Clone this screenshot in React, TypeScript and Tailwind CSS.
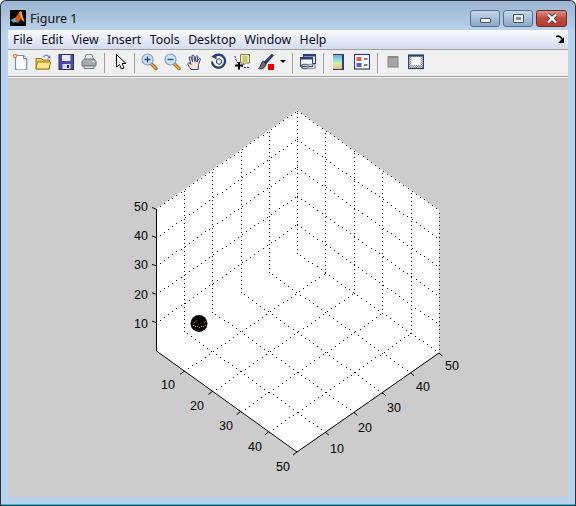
import type { ReactNode } from "react";

type Pt = [number, number];

const L: Pt = [156, 351];
const B: Pt = [297, 452];
const R: Pt = [439, 353];
const C: Pt = [297, 252.5];
const LT: Pt = [156, 209];
const T: Pt = [297, 110.5];
const RT: Pt = [439, 210];

const at = (p: Pt, q: Pt, k: number): Pt => [p[0] + ((q[0] - p[0]) * k) / 5, p[1] + ((q[1] - p[1]) * k) / 5];
const steps = [1, 2, 3, 4, 5];

// one pixel per dot, a dashed line with crisp edges drops dots on diagonals
function Dots({ a, b }: { a: Pt; b: Pt }) {
  const dx = b[0] - a[0];
  const dy = b[1] - a[1];
  const len = Math.hypot(dx, dy);
  const gap = Math.abs(dx) < 1 ? 4 : 5;
  const n = Math.floor(len / gap);
  let d = "";
  for (let i = 0; i <= n; i++) {
    const x = Math.round(a[0] + (dx * i * gap) / len);
    const y = Math.round(a[1] + (dy * i * gap) / len);
    d += `M${x} ${y}h1v1h-1z`;
  }
  return <path d={d} fill="#000" shapeRendering="crispEdges" />;
}

function Tick({ a, b }: { a: Pt; b: Pt }) {
  return <line x1={a[0]} y1={a[1]} x2={b[0]} y2={b[1]} stroke="#000" strokeWidth="1" />;
}

function Label({ x, y, v }: { x: number; y: number; v: number }) {
  return (
    <text x={x} y={y + 4.5} textAnchor="middle" fontSize="12.5" fill="#000" className="font-['Liberation_Sans',sans-serif]">
      {v}
    </text>
  );
}

function Plot() {
  return (
    <svg viewBox="8 78 560 419" className="block h-[419px] w-[560px]">
      <polygon points={[T, RT, R, B, L, LT].map((p) => p.join(",")).join(" ")} fill="#fff" />
      {[1, 2, 3, 4].map((k) => (
        <Dots key={k} a={at(L, B, k)} b={at(C, R, k)} />
      ))}
      {steps.map((k) => (
        <Dots key={k} a={at(B, R, k)} b={at(L, C, k)} />
      ))}
      {steps.map((k) => (
        <g key={k}>
          <Dots a={at(L, C, k)} b={at(LT, T, k)} />
          <Dots a={at(C, R, k)} b={at(T, RT, k)} />
          <Dots a={at(L, LT, k)} b={at(C, T, k)} />
          <Dots a={at(C, T, k)} b={at(R, RT, k)} />
        </g>
      ))}
      <polyline points="156.5,209 156.5,351 297,452 439,353" fill="none" stroke="#000" strokeWidth="1" />
      {steps.map((k) => {
        const z = at(L, LT, k);
        const p = at(L, B, k);
        const q = at(B, R, k);
        return (
          <g key={k}>
            <Tick a={[z[0] - 4, z[1] - 1.5]} b={z} />
            <Tick a={p} b={[p[0] - 4, p[1] + 3]} />
            <Tick a={q} b={[q[0] + 3.5, q[1] + 3]} />
          </g>
        );
      })}
      {[
        [141, 323, 10],
        [141, 294, 20],
        [141, 264, 30],
        [141, 235, 40],
        [141, 206, 50],
        [168, 384, 10],
        [197, 405, 20],
        [226, 425, 30],
        [255, 446, 40],
        [283, 466, 50],
        [337, 448, 10],
        [365, 427, 20],
        [394, 407, 30],
        [423, 386, 40],
        [452, 365, 50],
      ].map(([x, y, v]) => (
        <Label key={`${x}-${y}`} x={x} y={y} v={v} />
      ))}
      <circle cx="199" cy="323.5" r="8.5" fill="#000" />
      <g shapeRendering="crispEdges">
        <rect x="195" y="321" width="1" height="1" fill="#e03010" />
        <rect x="194" y="322" width="1" height="1" fill="#f04010" />
        <rect x="196" y="320" width="1" height="1" fill="#e03010" />
        <rect x="205" y="321" width="1" height="1" fill="#e04010" />
        <rect x="204" y="322" width="1" height="1" fill="#f06010" />
        <rect x="206" y="320" width="1" height="1" fill="#e03010" />
        <rect x="193" y="325" width="1" height="1" fill="#f0a010" />
        <rect x="195" y="326" width="1" height="1" fill="#f0a010" />
        <rect x="197" y="326" width="1" height="1" fill="#f0a010" />
        <rect x="199" y="327" width="1" height="1" fill="#e09010" />
        <rect x="201" y="326" width="1" height="1" fill="#f0a010" />
        <rect x="203" y="326" width="1" height="1" fill="#f0a010" />
        <rect x="205" y="325" width="1" height="1" fill="#e09010" />
      </g>
    </svg>
  );
}

function Icon({ w = 16, children }: { w?: number; children: ReactNode }) {
  return (
    <svg width={w} height="18" viewBox={`0 0 ${w} 18`} className="block">
      {children}
    </svg>
  );
}

function Btn({ w = "w-[23px]", children }: { w?: string; children: ReactNode }) {
  return <div className={`flex h-[25px] items-start justify-center pt-[3px] ${w}`}>{children}</div>;
}

function Sep({ w = "w-[7px]" }: { w?: string }) {
  return (
    <div className={`flex h-[25px] items-center justify-center ${w}`}>
      <div className="h-[20px] w-px bg-[#a0a0a0]" />
    </div>
  );
}

function ZoomIcon({ plus }: { plus: boolean }) {
  return (
    <Icon w={17}>
      <path d="M10 10.500l5 5" stroke="#8a5a20" strokeWidth="3.200" strokeLinecap="round" />
      <path d="M10.500 11l4.500 4.500" stroke="#f0a030" strokeWidth="1.800" strokeLinecap="round" />
      <circle cx="6.500" cy="6.500" r="5.500" fill="#cfe2f2" stroke="#7f9fc0" strokeWidth="1.200" />
      <path d={plus ? "M3.500 6.500h6M6.500 3.500v6" : "M3.500 6.500h6"} stroke="#24407f" strokeWidth="1.300" />
    </Icon>
  );
}

function Toolbar() {
  return (
    <div className="flex h-[26px] items-start bg-[#f0f0f0]">
      <Btn>
        <Icon>
          <path d="M3.500 2.500h8l3 3v11h-11z" fill="#fdfdff" stroke="#6f8cc0" strokeWidth="1.200" />
          <path d="M11.500 2.500v3h3" fill="#dfe8fa" stroke="#6f8cc0" />
          <path d="M5 16.500h10v-10" fill="none" stroke="#a8b8d8" />
          <circle cx="3" cy="3" r="2.300" fill="#f08040" />
          <circle cx="3" cy="3" r="1" fill="#ffe8c8" />
        </Icon>
      </Btn>
      <Btn>
        <Icon>
          <path d="M1 16v-10.500h5.500l1.500 1.500h6.500v9z" fill="#efc94f" stroke="#9a7a1c" />
          <path d="M1 16l1.500-7h13l-1.500 7z" fill="#fde68a" stroke="#9a7a1c" />
          <path d="M8.500 4c1.500-2.500 4-2.500 5.500 0" fill="none" stroke="#6f86a8" strokeWidth="1.300" />
          <path d="M15.500 2v3.500h-3.500z" fill="#6f86a8" />
        </Icon>
      </Btn>
      <Btn>
        <Icon>
          <rect x="1" y="1.500" width="14.500" height="15" fill="#4b4ba8" stroke="#2b2b78" />
          <rect x="4" y="2" width="8.500" height="6" fill="#e8e8f8" />
          <rect x="4.500" y="11" width="8" height="5" fill="#d8d8e0" />
          <rect x="9" y="12" width="2" height="3" fill="#202040" />
        </Icon>
      </Btn>
      <Btn>
        <Icon>
          <path d="M5 1.500h6l1.500 5h-9z" fill="#eceff3" stroke="#8a8f96" />
          <path d="M1 8.500l2.500-2.500h9.500l2 2.500v4.500h-14z" fill="#a8adb2" stroke="#6c7076" />
          <path d="M3 13h10v2.500h-10z" fill="#e0e2e4" stroke="#74787e" />
          <rect x="11.500" y="8" width="2" height="1" fill="#e8e8e8" />
        </Icon>
      </Btn>
      <Sep w="w-[8px]" />
      <Btn>
        <Icon w={12}>
          <path d="M2.500 1.500v12.500l3-2.500 2 4.500 2.500-1-2-4.500h4z" fill="#fff" stroke="#000" />
        </Icon>
      </Btn>
      <Sep />
      <Btn>
        <ZoomIcon plus />
      </Btn>
      <Btn>
        <ZoomIcon plus={false} />
      </Btn>
      <Btn>
        <Icon w={17}>
          <path
            d="M4 16.500c-1.500-2.500-3.500-4.500-3-6 .5-1 2-.5 3 1l-1.800-6.500c-.2-1.500 1.500-1.500 2-.5l1.300 4-.5-5.500c0-1.300 1.800-1.300 2 0l1 5.500 1-5c.3-1.200 2-1 1.800.3l-1 5.200 2-3.200c.6-1 2-.5 1.500.7l-1.800 5-.3 5z"
            fill="#fbe4cf"
            stroke="#2c3f86"
          />
        </Icon>
      </Btn>
      <Btn>
        <Icon w={17}>
          <path d="M4 3.500a6.500 6.500 0 1 1-2 5" fill="#fff" stroke="#27407c" strokeWidth="2.400" />
          <path d="M6.500 0.500v6l-5-3z" fill="#27407c" />
          <path d="M6.500 7l2.500-1.500 2.500 1.500v3l-2.500 1.500-2.500-1.500z" fill="#dfe5ee" stroke="#27407c" />
        </Icon>
      </Btn>
      <Btn>
        <Icon>
          <path d="M1 3c1 6 4 9 9 11.500h5" fill="none" stroke="#2030d0" strokeDasharray="2 1" />
          <path d="M6.500 1.500h9v8.500h-4l-2 2v-2h-3z" fill="#f4efa8" stroke="#7f7f50" />
          <path d="M8.500 4h5M8.500 6h5M8.500 8h5" stroke="#a0a060" />
          <path d="M1 12.500h8M5 9v7.500" stroke="#000" strokeWidth="2" />
        </Icon>
      </Btn>
      <Btn>
        <div className="ml-[3px]">
          <Icon>
            <path d="M6 9l8-8 1.500 1.500-7.500 8.500z" fill="#2e3f9a" stroke="#1a2468" strokeWidth="0.700" />
            <path d="M5.500 8c-3 1-2 5-5 7.500 3.500 1 7-.5 7.500-4.500z" fill="#6a6a6a" stroke="#202020" strokeWidth="0.800" />
            <rect x="10" y="11" width="6" height="6" fill="#f00000" />
          </Icon>
        </div>
      </Btn>
      <div className="flex h-[25px] w-[13px] items-start justify-center pt-[10px]">
        <div className="h-0 w-0 border-x-[3px] border-t-[3px] border-x-transparent border-t-black" />
      </div>
      <Sep />
      <Btn w="w-[24px]">
        <Icon w={17}>
          <rect x="3.500" y="1.500" width="12" height="9" fill="#dfe6f2" stroke="#2b3f78" />
          <rect x="3.500" y="1.500" width="12" height="2" fill="#2b3f78" />
          <rect x="0.500" y="4.500" width="12" height="9" fill="#f2f5fa" stroke="#2b3f78" />
          <rect x="0.500" y="4.500" width="12" height="2" fill="#2b3f78" />
          <rect x="1.500" y="11.500" width="7" height="4" rx="2" fill="none" stroke="#6a7380" strokeWidth="1.600" />
          <rect x="7.500" y="11.500" width="8" height="4" rx="2" fill="none" stroke="#9aa2ac" strokeWidth="1.600" />
        </Icon>
      </Btn>
      <Sep />
      <Btn>
        <Icon w={11}>
          <defs>
            <linearGradient id="cb" x1="0" y1="0" x2="0" y2="1">
              <stop offset="0" stopColor="#7f8fe8" />
              <stop offset="0.35" stopColor="#80e0d0" />
              <stop offset="0.65" stopColor="#d8f0a0" />
              <stop offset="1" stopColor="#f4b080" />
            </linearGradient>
          </defs>
          <rect x="0" y="1" width="10" height="15" fill="url(#cb)" />
          <rect x="9" y="1" width="2" height="16" fill="#2b3f78" />
          <rect x="0" y="16" width="11" height="1" fill="#2b3f78" />
          <rect x="0" y="1" width="10" height="1" fill="#2b3f78" />
        </Icon>
      </Btn>
      <Btn>
        <Icon>
          <rect x="0.500" y="1.500" width="15" height="14.500" fill="#fff" stroke="#2b3f78" strokeWidth="1.200" />
          <rect x="2.500" y="4" width="5" height="4" fill="#e85858" />
          <rect x="2.500" y="10" width="5" height="4" fill="#5858e8" />
          <path d="M10 6h3.500M10 12h3.500" stroke="#000" />
        </Icon>
      </Btn>
      <Sep w="w-[8px]" />
      <Btn>
        <Icon w={12}>
          <rect x="1" y="3.500" width="10" height="10.500" fill="#a6a6a6" stroke="#848484" />
          <rect x="2" y="3" width="9" height="2" fill="#888" />
        </Icon>
      </Btn>
      <Btn>
        <Icon>
          <defs>
            <pattern id="dith" width="2" height="2" patternUnits="userSpaceOnUse">
              <rect width="2" height="2" fill="#e8e8e8" />
              <rect width="1" height="1" fill="#808080" />
              <rect x="1" y="1" width="1" height="1" fill="#808080" />
            </pattern>
          </defs>
          <rect x="0.500" y="2" width="15" height="13.500" fill="url(#dith)" stroke="#2b3f78" strokeWidth="1.200" />
          <rect x="1" y="2" width="14" height="1.500" fill="#2b3f78" />
          <rect x="3.500" y="4" width="9" height="8" fill="#fff" />
        </Icon>
      </Btn>
    </div>
  );
}

function WinBtn({ w, className, children }: { w: string; className: string; children: ReactNode }) {
  return (
    <div className={`flex h-[17px] items-center justify-center rounded-[3px] border ${w} ${className}`}>
      {children}
    </div>
  );
}

export default function App() {
  return (
    <div className="h-[506px] w-[576px] bg-white font-['Noto_Sans',sans-serif] text-black">
      <div className="flex h-[506px] w-[576px] flex-col rounded-t-[6px] border border-b-0 border-[#28323e] bg-linear-to-b from-[#9bb5d0] from-0% via-[#b9d3ec] via-[30px] to-[#b9d3ec] px-[7px]">
        <div className="flex h-[29px] items-start">
          <svg width="16" height="16" viewBox="0 0 16 16" className="mt-[9px] ml-[2px] block">
            <rect width="16" height="16" fill="#000" />
            <path d="M1 10l4-2 3-4 3-3 3.500 11-3.500-3-3 4z" fill="#d85410" />
            <path d="M9 2l2-1 3.500 11-2.500-2z" fill="#f8a818" />
            <path d="M1 10l4-2 1.500 3-3 2z" fill="#40c0d8" />
          </svg>
          <span className="mt-[9px] ml-[4px] text-[12.500px] leading-[18px] text-[#0c0c0c]">Figure 1</span>
          <div className="mt-[9px] ml-auto flex gap-[3px] pr-[1px]">
            <WinBtn w="w-[30px]" className="border-[#5a6e86] bg-linear-to-b from-[#c4d6e8] to-[#8aaaca]">
              <div className="mt-[4px] h-[5px] w-[11px] rounded-[1px] border border-[#44566c] bg-white" />
            </WinBtn>
            <WinBtn w="w-[30px]" className="border-[#5a6e86] bg-linear-to-b from-[#c4d6e8] to-[#8aaaca]">
              <div className="h-[9px] w-[11px] rounded-[1px] border border-[#44566c] bg-[#eef2f6] p-[2px]">
                <div className="h-full w-full bg-[#7c8ea4]" />
              </div>
            </WinBtn>
            <WinBtn w="w-[31px]" className="border-[#6a2a28] bg-linear-to-b from-[#d99088] via-[#c0483c] to-[#b83a30]">
              <svg width="14" height="11" viewBox="0 0 14 11" className="block">
                <path d="M3 1.500l8 8M11 1.500l-8 8" stroke="#5a3a3a" strokeWidth="4" />
                <path d="M3 1.500l8 8M11 1.500l-8 8" stroke="#fff" strokeWidth="2.400" />
              </svg>
            </WinBtn>
          </div>
        </div>
        <div className="flex h-[20px] items-center gap-[8.500px] border-b border-[#a0a0a0] bg-linear-to-b from-[#fbfcfe] to-[#d2daee] pl-[5px] text-[12.300px] leading-[18px] text-[#0a0a24]">
          <span>File</span>
          <span>Edit</span>
          <span>View</span>
          <span>Insert</span>
          <span>Tools</span>
          <span>Desktop</span>
          <span>Window</span>
          <span>Help</span>
          <svg width="10" height="9" viewBox="0 0 10 9" className="mr-[3px] ml-auto block">
            <path d="M1 1.500c3-1 5 0 6 3" fill="none" stroke="#000" strokeWidth="1.500" />
            <path d="M9 2v6h-6z" fill="#000" />
          </svg>
        </div>
        <Toolbar />
        <div className="h-px bg-[#a0a0a0]" />
        <div className="h-px bg-[#f0f0f0]" />
        <div className="h-[419px] bg-[#cccccc]">
          <Plot />
        </div>
        <div className="flex-1" />
        <div className="-mx-[7px] h-[2px] border-t border-b border-t-[#1ec8e0] border-b-[#28323e]" />
      </div>
    </div>
  );
}
